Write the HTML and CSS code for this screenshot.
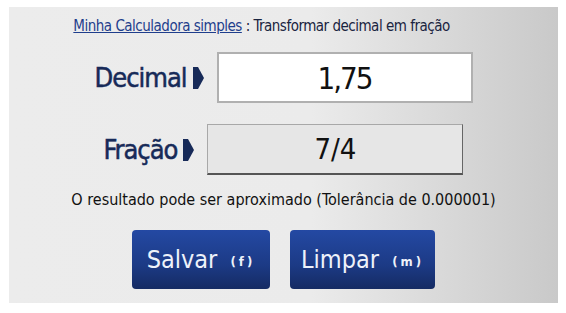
FILE: index.html
```html
<!DOCTYPE html>
<html>
<head>
  <meta charset="UTF-8">
  <meta name="viewport" content="width=device-width, initial-scale=1">
  <title>Decimal em fração</title>
  <link rel="stylesheet" href="styles.css">
</head>
<body>
  <div class="calc">
    <p class="title"><a href="#">Minha Calculadora simples</a> : Transformar decimal em fração</p>
    <div class="row">
      <label for="decimal">Decimal <svg class="arrow" viewBox="0 0 11 22"><polygon points="0,0 5,0 11,11 5,22 0,22"/></svg></label>
      <input type="text" id="decimal" class="field" value="1,75">
    </div>
    <div class="row">
      <label>Fração <svg class="arrow" viewBox="0 0 11 22"><polygon points="0,0 5,0 11,11 5,22 0,22"/></svg></label>
      <div class="field result">7/4</div>
    </div>
    <p class="note">O resultado pode ser aproximado (Tolerância de 0.000001)</p>
    <div class="buttons">
      <button class="btn save">Salvar <small>(f)</small></button>
      <button class="btn clear">Limpar <small>(m)</small></button>
    </div>
  </div>
</body>
</html>
```

FILE: styles.css
```css
body {
  margin: 0;
  padding: 7px 8px 0 9px;
  font-family: "DejaVu Sans Condensed", "DejaVu Sans", sans-serif;
  font-stretch: condensed;
}
.calc {
  width: 549px;
  padding: 9px 0 14px;
  background: linear-gradient(to right, #ececec 0%, #ebebeb 55%, #c9c9c9 100%);
  color: #1a2b55;
  text-align: center;
}
.title {
  margin: 0;
  padding-right: 44px;
  font-size: 15px;
  letter-spacing: -0.5px;
  line-height: 20px;
  color: #1a2440;
}
.title a {
  color: #1f3e8c;
}
.row {
  display: flex;
  justify-content: center;
  align-items: center;
  gap: 13px;
  margin-top: 16px;
}
.row + .row {
  margin-top: 21px;
}
.row label {
  display: flex;
  align-items: center;
  gap: 6px;
  font-size: 27px;
  letter-spacing: -1px;
  color: #172a58;
  -webkit-text-stroke: 0.5px #172a58;
}
.arrow {
  width: 11px;
  height: 22px;
  fill: #172a58;
}
.field {
  box-sizing: border-box;
  width: 256px;
  height: 51px;
  font-family: "DejaVu Sans Condensed", "DejaVu Sans", sans-serif;
  font-stretch: condensed;
  font-size: 31px;
  letter-spacing: -2px;
  text-align: center;
  color: #111;
}
input.field {
  border: 2px solid #b0b0b0;
  background: #fff;
  outline: none;
}
.result {
  display: flex;
  align-items: center;
  justify-content: center;
  background: #e6e6e6;
  border: 1px solid #a8a8a8;
  border-right-color: #666;
  border-bottom: 2px solid #555;
  font-size: 29px;
  letter-spacing: 0;
}
.note {
  margin: 15px 0 0;
  font-size: 16px;
  line-height: 20px;
  color: #111;
}
.buttons {
  display: flex;
  justify-content: center;
  gap: 20px;
  margin-top: 20px;
}
.btn {
  height: 59px;
  border: none;
  border-radius: 4px;
  background: linear-gradient(to bottom, #2449a3 0%, #1c3a85 60%, #152b63 100%);
  color: #eef2fa;
  font-family: "DejaVu Sans Condensed", "DejaVu Sans", sans-serif;
  font-stretch: condensed;
  font-size: 25px;
  cursor: pointer;
}
.save {
  width: 138px;
}
.clear {
  width: 145px;
}
.btn small {
  margin-left: 6px;
  font-size: 13px;
  font-weight: bold;
  letter-spacing: 3px;
  vertical-align: 2px;
}
```
